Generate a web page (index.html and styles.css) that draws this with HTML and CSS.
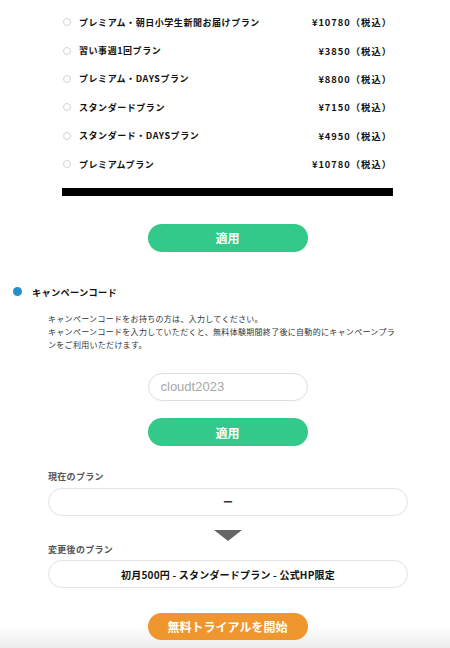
FILE: index.html
```html
<!DOCTYPE html>
<html lang="ja">
<head>
<meta charset="utf-8">
<title>プラン変更</title>
<link rel="stylesheet" href="styles.css">
</head>
<body>
<div class="page">
  <ul class="plans">
    <li class="plan"><span class="radio"></span><span class="plan-name">プレミアム・朝日小学生新聞お届けプラン</span><span class="plan-price">¥10780（税込）</span></li>
    <li class="plan"><span class="radio"></span><span class="plan-name">習い事週1回プラン</span><span class="plan-price">¥3850（税込）</span></li>
    <li class="plan"><span class="radio"></span><span class="plan-name">プレミアム・DAYSプラン</span><span class="plan-price">¥8800（税込）</span></li>
    <li class="plan"><span class="radio"></span><span class="plan-name">スタンダードプラン</span><span class="plan-price">¥7150（税込）</span></li>
    <li class="plan"><span class="radio"></span><span class="plan-name">スタンダード・DAYSプラン</span><span class="plan-price">¥4950（税込）</span></li>
    <li class="plan"><span class="radio"></span><span class="plan-name">プレミアムプラン</span><span class="plan-price">¥10780（税込）</span></li>
  </ul>
  <div class="bar"></div>
  <button class="btn btn-green btn-first" type="button">適用</button>

  <h2 class="section-title"><span class="dot"></span>キャンペーンコード</h2>
  <p class="desc">キャンペーンコードをお持ちの方は、入力してください。<br>キャンペーンコードを入力していただくと、無料体験期間終了後に自動的にキャンペーンプランをご利用いただけます。</p>
  <input class="code-input" type="text" placeholder="cloudt2023">
  <button class="btn btn-green btn-second" type="button">適用</button>

  <div class="label label-current">現在のプラン</div>
  <div class="plan-box plan-box-current">ー</div>
  <div class="arrow"></div>
  <div class="label label-next">変更後のプラン</div>
  <div class="plan-box plan-box-next">初月500円 - スタンダードプラン - 公式HP限定</div>
  <button class="btn btn-orange" type="button">無料トライアルを開始</button>
</div>
</body>
</html>
```

FILE: styles.css
```css
html {
  height: 100%;
  background: linear-gradient(to bottom, #ffffff calc(100% - 22px), #ececec 100%);
}
body {
  margin: 0;
  font-family: "Noto Sans CJK JP", "Noto Sans", sans-serif;
  color: #111;
}
.page {
  display: flex;
  flex-direction: column;
  padding-left: 5px;
}
.plans {
  list-style: none;
  margin: 8px 57px 0 57px;
  padding: 0;
}
.plan {
  display: flex;
  align-items: center;
  height: 28.4px;
  font-size: 9px;
  font-weight: 700;
  letter-spacing: 0.55px;
}
.radio {
  width: 8px;
  height: 8px;
  box-sizing: border-box;
  border: 1px solid #d4d4d4;
  border-radius: 50%;
  margin-left: 1px;
  margin-right: 8px;
  flex: none;
}
.plan-name {
  flex: 1;
}
.plan-price {
  margin-right: 1px;
  font-size: 9.3px;
  letter-spacing: 1px;
}
.bar {
  height: 8px;
  background: #000;
  margin: 9.6px 57px 0 57px;
}
.btn {
  display: block;
  width: 160px;
  height: 28px;
  border: 0;
  border-radius: 14px;
  color: #fff;
  font-family: "Noto Sans CJK JP", sans-serif;
  font-weight: 700;
  font-size: 12px;
  padding: 0;
  align-self: center;
  margin-left: 0;
}
.btn-green {
  background: #33c98a;
}
.btn-first {
  margin-top: 28px;
}
.section-title {
  display: flex;
  align-items: center;
  margin: 33px 0 0 8px;
  height: 14px;
  font-size: 9.2px;
  font-weight: 700;
  letter-spacing: 0.3px;
}
.dot {
  width: 9px;
  height: 9px;
  border-radius: 50%;
  background: #2590c6;
  margin-right: 10px;
}
.desc {
  margin: 13.5px 0 0 43px;
  width: 352px;
  font-size: 8px;
  line-height: 13px;
  letter-spacing: 0.3px;
  color: #333;
}
.code-input {
  align-self: center;
  width: 160px;
  height: 28px;
  box-sizing: border-box;
  margin-top: 21.5px;
  border: 1px solid #dedede;
  border-radius: 14px;
  padding: 0 12px;
  font-family: "Liberation Sans", sans-serif;
  font-size: 13px;
  background: #fff;
  outline: none;
}
.code-input::placeholder {
  color: #a8a8a8;
}
.btn-second {
  margin-top: 17.5px;
}
.label {
  margin-left: 43px;
  height: 14px;
  line-height: 14px;
  font-size: 9px;
  font-weight: 700;
  color: #555;
  letter-spacing: 0.3px;
}
.label-current {
  margin-top: 24px;
}
.label-next {
  margin-top: 2.5px;
}
.plan-box {
  margin: 3.5px 42px 0 43px;
  height: 28px;
  box-sizing: border-box;
  border: 1px solid #e2e2e2;
  border-radius: 14px;
  display: flex;
  align-items: center;
  justify-content: center;
  font-size: 10px;
  font-weight: 700;
  background: #fff;
}
.plan-box-current {
  color: #333;
}
.plan-box-next {
  margin-top: 3px;
  color: #111;
  letter-spacing: 0.2px;
}
.arrow {
  align-self: center;
  width: 0;
  height: 0;
  margin-top: 14px;
  border-left: 14.5px solid transparent;
  border-right: 14.5px solid transparent;
  border-top: 11px solid #666;
}
.btn-orange {
  background: #f0962f;
  margin-top: 25px;
  height: 27px;
}
```
